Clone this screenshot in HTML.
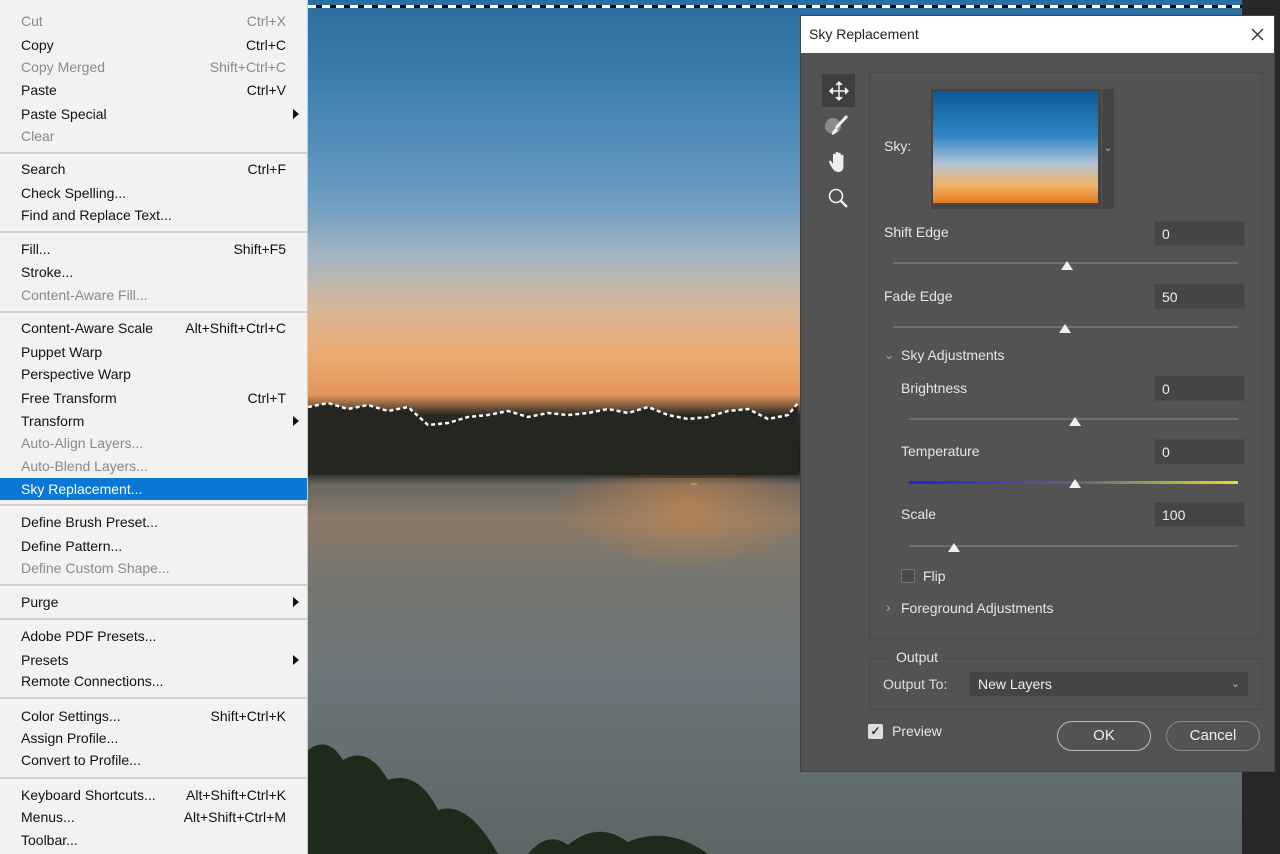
<!DOCTYPE html>
<html><head><meta charset="utf-8"><style>
*{margin:0;padding:0;box-sizing:border-box}
body{width:1280px;height:854px;overflow:hidden;position:relative;font-family:"Liberation Sans",sans-serif;background:#282828}
.menu{position:absolute;left:0;top:0;width:308px;height:854px;background:#f2f2f2;border-right:1px solid #ccc}
.mi{position:absolute;left:0;width:307px;height:22px;line-height:22px;font-size:14px;color:#111;padding-left:21px}
.mi.d{color:#8a8a8a}
.mi .k{position:absolute;right:21px;top:0}
.mi.h{background:#0a78d7;color:#fff}
.mi .a{position:absolute;right:8px;top:6px;width:0;height:0;border-left:6px solid #111;border-top:5px solid transparent;border-bottom:5px solid transparent}
.sep{position:absolute;left:0;width:307px;height:2px;background:#d0d0d0}
.img{position:absolute;left:308px;top:0;width:934px;height:854px;background:linear-gradient(180deg,#2b6d9e 0px,#3a7fb0 80px,#6d9cc0 200px,#a8b5c0 260px,#d8b596 310px,#eaa86c 360px,#e2955c 395px,#2a2a24 415px,#1d1f1c 470px,#6b6760 485px,#8a7a68 520px,#767670 580px,#6c767a 680px,#5c6666 854px)}
.dlg{position:absolute;left:800px;top:15px;width:475px;height:757px;background:#535353;border:1px solid #444}
.tb{position:absolute;left:0;top:0;width:100%;height:37px;background:#fff;font-size:14px;color:#222;line-height:37px;padding-left:8px}
.l{position:absolute;color:#e6e6e6;font-size:14px}
.in{position:absolute;background:#454545;border:1px solid #4a4a4a;height:25px;color:#eee;font-size:14px;line-height:24px;padding-left:7px}
.tr{position:absolute;height:2px;background:#707070}
.th{position:absolute;width:0;height:0;border-left:6px solid transparent;border-right:6px solid transparent;border-bottom:9px solid #f0f0f0}
.btn{position:absolute;height:30px;border:1.5px solid #bbb;border-radius:15px;color:#eee;font-size:15px;text-align:center;line-height:27px}
</style></head><body>
<div class="menu">
<div class="mi d" style="top:10px">Cut<span class="k">Ctrl+X</span></div>
<div class="mi" style="top:34px">Copy<span class="k">Ctrl+C</span></div>
<div class="mi d" style="top:56px">Copy Merged<span class="k">Shift+Ctrl+C</span></div>
<div class="mi" style="top:79px">Paste<span class="k">Ctrl+V</span></div>
<div class="mi" style="top:103px">Paste Special<span class="a"></span></div>
<div class="mi d" style="top:125px">Clear</div>
<div class="sep" style="top:152px"></div>
<div class="mi" style="top:158px">Search<span class="k">Ctrl+F</span></div>
<div class="mi" style="top:182px">Check Spelling...</div>
<div class="mi" style="top:204px">Find and Replace Text...</div>
<div class="sep" style="top:231px"></div>
<div class="mi" style="top:238px">Fill...<span class="k">Shift+F5</span></div>
<div class="mi" style="top:261px">Stroke...</div>
<div class="mi d" style="top:284px">Content-Aware Fill...</div>
<div class="sep" style="top:311px"></div>
<div class="mi" style="top:317px">Content-Aware Scale<span class="k">Alt+Shift+Ctrl+C</span></div>
<div class="mi" style="top:341px">Puppet Warp</div>
<div class="mi" style="top:363px">Perspective Warp</div>
<div class="mi" style="top:387px">Free Transform<span class="k">Ctrl+T</span></div>
<div class="mi" style="top:410px">Transform<span class="a"></span></div>
<div class="mi d" style="top:432px">Auto-Align Layers...</div>
<div class="mi d" style="top:455px">Auto-Blend Layers...</div>
<div class="mi h" style="top:478px">Sky Replacement...</div>
<div class="sep" style="top:504px"></div>
<div class="mi" style="top:511px">Define Brush Preset...</div>
<div class="mi" style="top:535px">Define Pattern...</div>
<div class="mi d" style="top:557px">Define Custom Shape...</div>
<div class="sep" style="top:584px"></div>
<div class="mi" style="top:591px">Purge<span class="a"></span></div>
<div class="sep" style="top:618px"></div>
<div class="mi" style="top:625px">Adobe PDF Presets...</div>
<div class="mi" style="top:649px">Presets<span class="a"></span></div>
<div class="mi" style="top:670px">Remote Connections...</div>
<div class="sep" style="top:697px"></div>
<div class="mi" style="top:705px">Color Settings...<span class="k">Shift+Ctrl+K</span></div>
<div class="mi" style="top:727px">Assign Profile...</div>
<div class="mi" style="top:749px">Convert to Profile...</div>
<div class="sep" style="top:777px"></div>
<div class="mi" style="top:784px">Keyboard Shortcuts...<span class="k">Alt+Shift+Ctrl+K</span></div>
<div class="mi" style="top:806px">Menus...<span class="k">Alt+Shift+Ctrl+M</span></div>
<div class="mi" style="top:829px">Toolbar...</div>
</div>
<div class="img">
<div style="position:absolute;left:0;top:5px;width:934px;height:3px;background:repeating-linear-gradient(90deg,#fff 0 8px,#111 8px 14px)"></div>
<div style="position:absolute;left:250px;top:478px;width:260px;height:90px;background:radial-gradient(ellipse at 50% 30%,rgba(220,140,70,.55),rgba(220,140,70,0) 70%)"></div>
<svg style="position:absolute;left:0;top:395px" width="934" height="90"><path d="M0 12 L20 8 L40 14 L60 10 L80 16 L100 12 L120 30 L140 28 L160 22 L180 20 L200 16 L220 22 L240 18 L260 20 L280 18 L300 14 L320 18 L340 12 L360 20 L380 24 L400 22 L420 16 L440 14 L460 24 L480 20 L490 8 L490 80 L0 80 Z" fill="#262621"/><path d="M0 12 L20 8 L40 14 L60 10 L80 16 L100 12 L120 30 L140 28 L160 22 L180 20 L200 16 L220 22 L240 18 L260 20 L280 18 L300 14 L320 18 L340 12 L360 20 L380 24 L400 22 L420 16 L440 14 L460 24 L480 20 L490 8" fill="none" stroke="#fff" stroke-width="2.5" stroke-dasharray="4 3"/><rect x="383" y="88" width="6" height="25" fill="#e08a40" opacity=".8"/></svg>
<svg style="position:absolute;left:0;top:730px" width="500" height="124"><path d="M0 124 L0 20 Q20 5 35 30 Q60 15 80 50 Q110 40 130 80 Q160 70 190 124 Z M220 124 Q240 100 260 115 Q290 90 320 112 Q360 95 400 124 Z" fill="#1e2a1a"/></svg>
</div>
<div class="dlg">
<div class="tb">Sky Replacement<svg style="position:absolute;right:10px;top:12px" width="13" height="13"><path d="M1 1L12 12M12 1L1 12" stroke="#333" stroke-width="1.4"/></svg></div>
<div style="position:absolute;left:21px;top:58px;width:33px;height:33px;background:#3f3f3f"></div>
<svg style="position:absolute;left:27px;top:64px" width="22" height="22" fill="none" stroke="#eee" stroke-width="1.5"><path d="M11 2V20M2 11H20"/><path d="M8 5L11 2L14 5M8 17L11 20L14 17M5 8L2 11L5 14M17 8L20 11L17 14" fill="#eee"/></svg>
<svg style="position:absolute;left:22px;top:98px" width="28" height="24"><circle cx="10" cy="12" r="8" fill="#8a8a8a"/><path d="M24 2L13 14" stroke="#eee" stroke-width="3"/><path d="M13 14Q9 16 9 21Q13 20 15 16Z" fill="#eee"/></svg>
<svg style="position:absolute;left:27px;top:134px" width="22" height="24" fill="#eee"><path d="M5 10V5a1.3 1.3 0 012.6 0V10V3a1.3 1.3 0 012.6 0V10V4a1.3 1.3 0 012.6 0V10V6a1.3 1.3 0 012.6 0V15Q16 22 10 22Q6 22 3 16L1 12Q1 10 3 11L5 14Z"/></svg>
<svg style="position:absolute;left:26px;top:171px" width="22" height="22" fill="none" stroke="#eee" stroke-width="1.6"><circle cx="9" cy="9" r="6.5"/><path d="M14 14L20 20" stroke-width="2.4"/></svg>
<div style="position:absolute;left:68px;top:56px;width:394px;height:567px;border:1px solid #4a4a4a"></div>
<div class="l" style="left:83px;top:122px">Sky:</div>
<div style="position:absolute;left:130px;top:73px;width:170px;height:120px;background:#444"></div>
<div style="position:absolute;left:132px;top:76px;width:165px;height:111px;background:linear-gradient(180deg,#0c5a98,#2f86c4 40%,#b4c4d4 65%,#f4b060 85%,#e07a20)"></div>
<div style="position:absolute;left:301px;top:73px;width:12px;height:120px;background:#444;color:#bbb;font-size:10px;line-height:120px;text-align:center">⌄</div>
<div class="l" style="left:83px;top:208px">Shift Edge</div>
<div class="in" style="left:353px;top:205px;width:91px">0</div>
<div class="tr" style="left:92px;top:246px;width:345px"></div><div class="th" style="left:260px;top:245px"></div>
<div class="l" style="left:83px;top:272px">Fade Edge</div>
<div class="in" style="left:353px;top:268px;width:91px">50</div>
<div class="tr" style="left:92px;top:310px;width:345px"></div><div class="th" style="left:258px;top:308px"></div>
<div class="l" style="left:83px;top:332px;color:#aaa;font-size:12px">⌄</div>
<div class="l" style="left:100px;top:331px">Sky Adjustments</div>
<div class="l" style="left:100px;top:364px">Brightness</div>
<div class="in" style="left:353px;top:360px;width:91px">0</div>
<div class="tr" style="left:108px;top:402px;width:329px"></div><div class="th" style="left:268px;top:401px"></div>
<div class="l" style="left:100px;top:427px">Temperature</div>
<div class="in" style="left:353px;top:423px;width:91px">0</div>
<div style="position:absolute;left:108px;top:465px;width:329px;height:3px;background:linear-gradient(90deg,#2020e0,#606080 50%,#e0e020)"></div><div class="th" style="left:268px;top:463px"></div>
<div class="l" style="left:100px;top:490px">Scale</div>
<div class="in" style="left:353px;top:486px;width:91px">100</div>
<div class="tr" style="left:108px;top:529px;width:329px"></div><div class="th" style="left:147px;top:527px"></div>
<div style="position:absolute;left:100px;top:553px;width:14px;height:14px;border:1px solid #777;background:#4a4a4a;border-radius:2px"></div>
<div class="l" style="left:122px;top:552px">Flip</div>
<div class="l" style="left:85px;top:583px;color:#aaa">›</div>
<div class="l" style="left:100px;top:584px">Foreground Adjustments</div>
<div style="position:absolute;left:68px;top:642px;width:394px;height:52px;border:1px solid #4a4a4a"></div>
<div class="l" style="left:90px;top:633px;background:#535353;padding:0 5px">Output</div>
<div class="l" style="left:82px;top:660px;color:#ddd">Output To:</div>
<div class="in" style="left:168px;top:656px;width:279px;height:24px;border:none;line-height:24px;padding-left:9px">New Layers<span style="position:absolute;right:8px;color:#bbb;font-size:11px">⌄</span></div>
<div style="position:absolute;left:67px;top:708px;width:15px;height:15px;background:#ddd;border-radius:2px;color:#333;font-size:12px;line-height:15px;text-align:center;font-weight:bold">✓</div>
<div class="l" style="left:91px;top:707px">Preview</div>
<div class="btn" style="left:256px;top:705px;width:94px">OK</div>
<div class="btn" style="left:365px;top:705px;width:94px;border-color:#888">Cancel</div>
</div>
</body></html>
